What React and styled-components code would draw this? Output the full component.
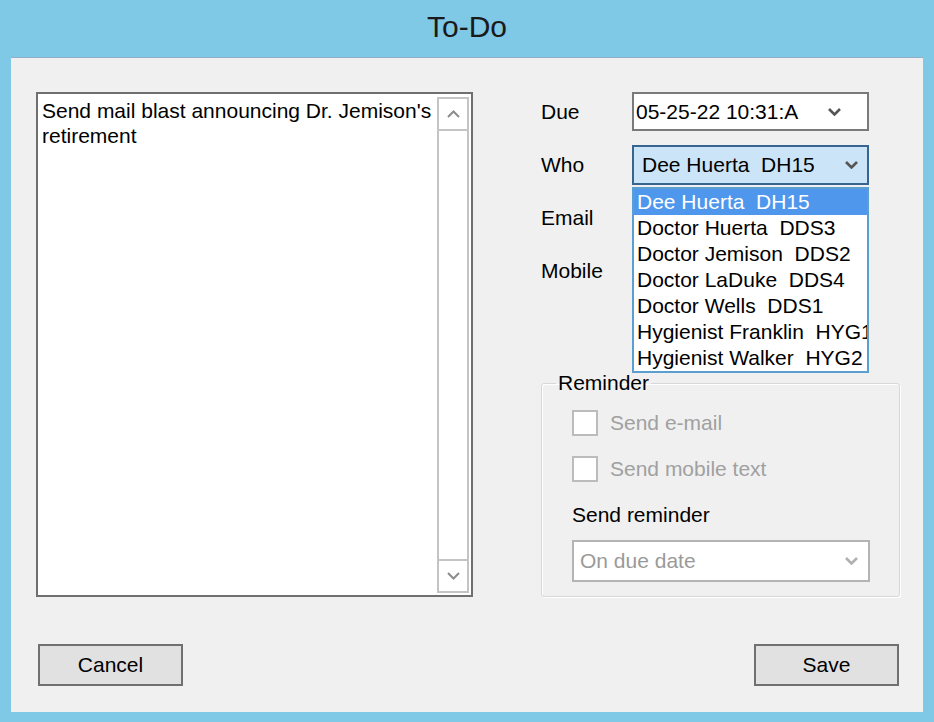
import React from 'react';
import styled, { createGlobalStyle } from 'styled-components';

const GlobalStyle = createGlobalStyle`
  html, body {
    margin: 0;
    padding: 0;
  }
  body {
    background: #7fc8e6;
    font-family: "Liberation Sans", Arial, sans-serif;
  }
`

const Window = styled.div`
  width: 934px;
  height: 722px;
  display: flex;
  flex-direction: column;
  background: #7fc8e6;
`
const TitleBar = styled.div`
  height: 57px;
  display: flex;
  align-items: center;
  justify-content: center;
  padding-bottom: 3px;
  box-sizing: border-box;
  font-size: 30px;
  color: #1a1a1a;
`
const Client = styled.div`
  margin: 0 11px;
  height: 655px;
  box-sizing: border-box;
  background: #f0f0f0;
  border-top: 1px solid #8fb0c6;
  padding: 34px 23px 26px 25px;
  display: flex;
  flex-direction: column;
  justify-content: space-between;
  font-size: 21px;
  color: #000;
`
const TopSection = styled.div`
  display: flex;
  height: 505px;
`
const NoteBox = styled.div`
  flex: none;
  width: 437px;
  height: 505px;
  box-sizing: border-box;
  border: 2px solid #6f6f6f;
  background: #fff;
  display: flex;
`
const NoteText = styled.div`
  flex: 1;
  padding: 4px 2px 0 4px;
  line-height: 25px;
`
const ScrollBar = styled.div`
  width: 32px;
  margin: 3px 2px 2px 0;
  box-sizing: border-box;
  border: 2px solid #c4c4c4;
  display: flex;
  flex-direction: column;
`
const ScrollButton = styled.div`
  height: 30px;
  display: flex;
  align-items: center;
  justify-content: center;
  border-${p => (p.$down ? 'top' : 'bottom')}: 2px solid #c4c4c4;
`
const ScrollTrack = styled.div`
  flex: 1;
`
const RightColumn = styled.div`
  flex: none;
  margin-left: 68px;
  width: 359px;
  display: flex;
  flex-direction: column;
`
const FormGrid = styled.div`
  display: grid;
  grid-template-columns: 91px 237px;
  grid-auto-rows: 40px;
  row-gap: 13px;
`
const Label = styled.div`
  display: flex;
  align-items: center;
`
const ComboWrap = styled.div`
  position: relative;
`
const Combo = styled.div`
  height: ${p => p.$height || 40}px;
  width: ${p => p.$width || 237}px;
  box-sizing: border-box;
  border: 2px solid ${p => (p.$focus ? '#38658f' : p.$disabled ? '#b4b4b4' : '#7a7a7a')};
  background: ${p => (p.$focus ? '#cce4f7' : '#fff')};
  color: ${p => (p.$disabled ? '#9a9a9a' : '#000')};
  display: flex;
  align-items: center;
  justify-content: space-between;
  padding: 0 ${p => p.$arrowGap || 9}px 0 ${p => p.$pad || 6}px;
  white-space: pre;
`
const DropList = styled.div`
  position: absolute;
  top: calc(100% + 2px);
  left: 0;
  width: 237px;
  box-sizing: border-box;
  border: 2px solid #5a9fd0;
  background: #fff;
  overflow: hidden;
  z-index: 2;
`
const DropItem = styled.div`
  height: 26px;
  line-height: 26px;
  padding-left: 3px;
  white-space: pre;
  overflow: hidden;
  background: ${p => (p.$active ? '#4f97ec' : '#fff')};
  color: ${p => (p.$active ? '#fff' : '#000')};
`
const GroupBox = styled.fieldset`
  margin: auto 0 0 0;
  height: 225px;
  box-sizing: border-box;
  padding: 0 0 14px 0;
  border: 1px solid #d6d9dc;
  border-radius: 3px;
  box-shadow: 1px 1px 0 #fff, inset 1px 1px 0 #fff;
`
const Legend = styled.legend`
  margin-left: 14px;
  padding: 0 2px;
  line-height: 22px;
`
const GroupBody = styled.div`
  padding: 16px 0 0 30px;
  display: flex;
  flex-direction: column;
`
const CheckRow = styled.div`
  display: flex;
  align-items: center;
  height: 26px;
  margin-bottom: 20px;
  color: #a0a0a0;
`
const CheckBox = styled.div`
  width: 26px;
  height: 26px;
  box-sizing: border-box;
  border: 2px solid #bcbcbc;
  background: #fff;
  margin-right: 12px;
`
const SubLabel = styled.div`
  line-height: 24px;
  margin-top: 1px;
  margin-bottom: 13px;
`
const ButtonRow = styled.div`
  display: flex;
  justify-content: space-between;
  padding: 0 1px 0 2px;
`
const Button = styled.div`
  width: 145px;
  height: 42px;
  box-sizing: border-box;
  border: 2px solid #707070;
  background: #e1e1e1;
  display: flex;
  align-items: center;
  justify-content: center;
`

const Chevron = ({ color = '#555', up = false, w = 13, h = 8, sw = 2.6 }) => (
  <svg width={w} height={h} viewBox="0 0 13 8">
    <polyline
      points={up ? '1,7 6.5,1.5 12,7' : '1,1 6.5,6.5 12,1'}
      fill="none"
      stroke={color}
      strokeWidth={sw}
    />
  </svg>
);

const people = [
  'Dee Huerta  DH15',
  'Doctor Huerta  DDS3',
  'Doctor Jemison  DDS2',
  'Doctor LaDuke  DDS4',
  'Doctor Wells  DDS1',
  'Hygienist Franklin  HYG1',
  'Hygienist Walker  HYG2',
];

const App = () => {
  return (
    <Window>
      <GlobalStyle />
      <TitleBar>To-Do</TitleBar>
      <Client>
        <TopSection>
          <NoteBox>
            <NoteText>Send mail blast announcing Dr. Jemison's retirement</NoteText>
            <ScrollBar>
              <ScrollButton>
                <Chevron up color="#8c8c8c" sw={2} />
              </ScrollButton>
              <ScrollTrack />
              <ScrollButton $down>
                <Chevron color="#8c8c8c" sw={2} />
              </ScrollButton>
            </ScrollBar>
          </NoteBox>
          <RightColumn>
            <FormGrid>
              <Label>Due</Label>
              <Combo $height={39} $pad={2} $arrowGap={26}>
                <span>05-25-22 10:31:A</span>
                <Chevron color="#555" />
              </Combo>
              <Label>Who</Label>
              <ComboWrap>
                <Combo $focus $pad={8}>
                  <span>{people[0]}</span>
                  <Chevron color="#555" />
                </Combo>
                <DropList>
                  {people.map((p, i) => (
                    <DropItem key={p} $active={i === 0}>{p}</DropItem>
                  ))}
                </DropList>
              </ComboWrap>
              <Label>Email</Label>
              <div />
              <Label>Mobile</Label>
              <div />
            </FormGrid>
            <GroupBox>
              <Legend>Reminder</Legend>
              <GroupBody>
                <CheckRow>
                  <CheckBox />
                  Send e-mail
                </CheckRow>
                <CheckRow>
                  <CheckBox />
                  Send mobile text
                </CheckRow>
                <SubLabel>Send reminder</SubLabel>
                <Combo $disabled $width={298} $height={42} $pad={6} $arrowGap={10}>
                  <span>On due date</span>
                  <Chevron color="#b0b0b0" />
                </Combo>
              </GroupBody>
            </GroupBox>
          </RightColumn>
        </TopSection>
        <ButtonRow>
          <Button>Cancel</Button>
          <Button>Save</Button>
        </ButtonRow>
      </Client>
    </Window>
  );
};

export default App;
